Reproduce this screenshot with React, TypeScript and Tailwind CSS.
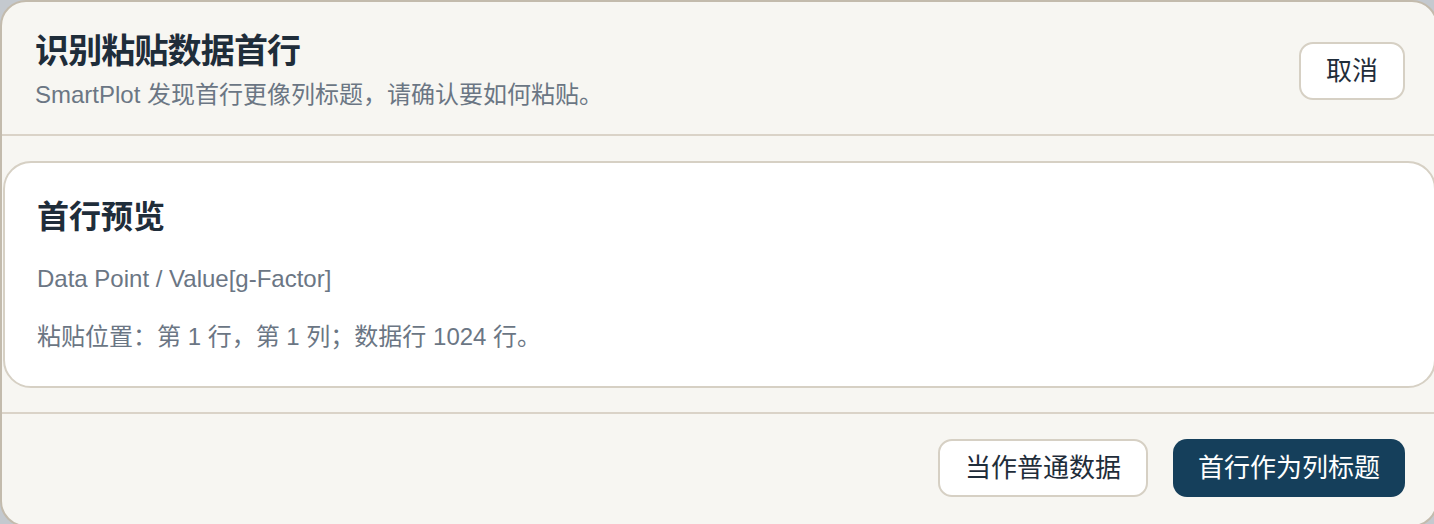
import React from 'react';

const font = { fontFamily: '"Liberation Sans", "Noto Sans CJK SC", sans-serif' };

export default function App() {
  return (
    <div className="w-[1434px] h-[524px] overflow-hidden bg-[#c4c9cf]" style={font}>
      <div className="w-[1438px] h-[527px] flex flex-col rounded-[26px] border-2 border-[#c3bbad] bg-[#f7f6f2] text-[#1f2d3a]">
        {/* Header */}
        <div className="h-[134px] shrink-0 flex items-start justify-between pl-[33px] pr-[31px] border-b-2 border-[#dad3c8]">
          <div className="pt-[29px]">
            <h2 className="text-[34px] leading-[40px] font-bold tracking-tight">识别粘贴数据首行</h2>
            <p className="mt-[8px] text-[24px] leading-[32px] text-[#6b7684]">SmartPlot 发现首行更像列标题，请确认要如何粘贴。</p>
          </div>
          <button className="mt-[40px] h-[58px] px-[25px] rounded-[14px] border-2 border-[#d6d0c4] bg-white text-[26px] text-[#1f2d3a]">
            取消
          </button>
        </div>

        {/* Body */}
        <div className="shrink-0 pt-[25px] pb-[24px] pl-[1px]">
          <div className="h-[227px] rounded-[28px] border-2 border-[#d6d0c4] bg-white pl-[32px] pt-[34px]">
            <h3 className="text-[32px] leading-[40px] font-bold">首行预览</h3>
            <p className="mt-[26px] text-[24px] leading-[32px] text-[#6b7684]">Data Point / Value[g-Factor]</p>
            <p className="mt-[26px] text-[24px] leading-[32px] text-[#6b7684]">粘贴位置：第 1 行，第 1 列；数据行 1024 行。</p>
          </div>
        </div>

        {/* Footer */}
        <div className="flex-1 border-t-2 border-[#dad3c8] flex justify-end items-start gap-[25px] pt-[25px] pr-[31px]">
          <button className="h-[58px] px-[25px] rounded-[14px] border-2 border-[#d6d0c4] bg-white text-[26px] text-[#1f2d3a]">
            当作普通数据
          </button>
          <button className="h-[58px] px-[25px] rounded-[14px] bg-[#153f5b] text-[26px] text-white">
            首行作为列标题
          </button>
        </div>
      </div>
    </div>
  );
}
